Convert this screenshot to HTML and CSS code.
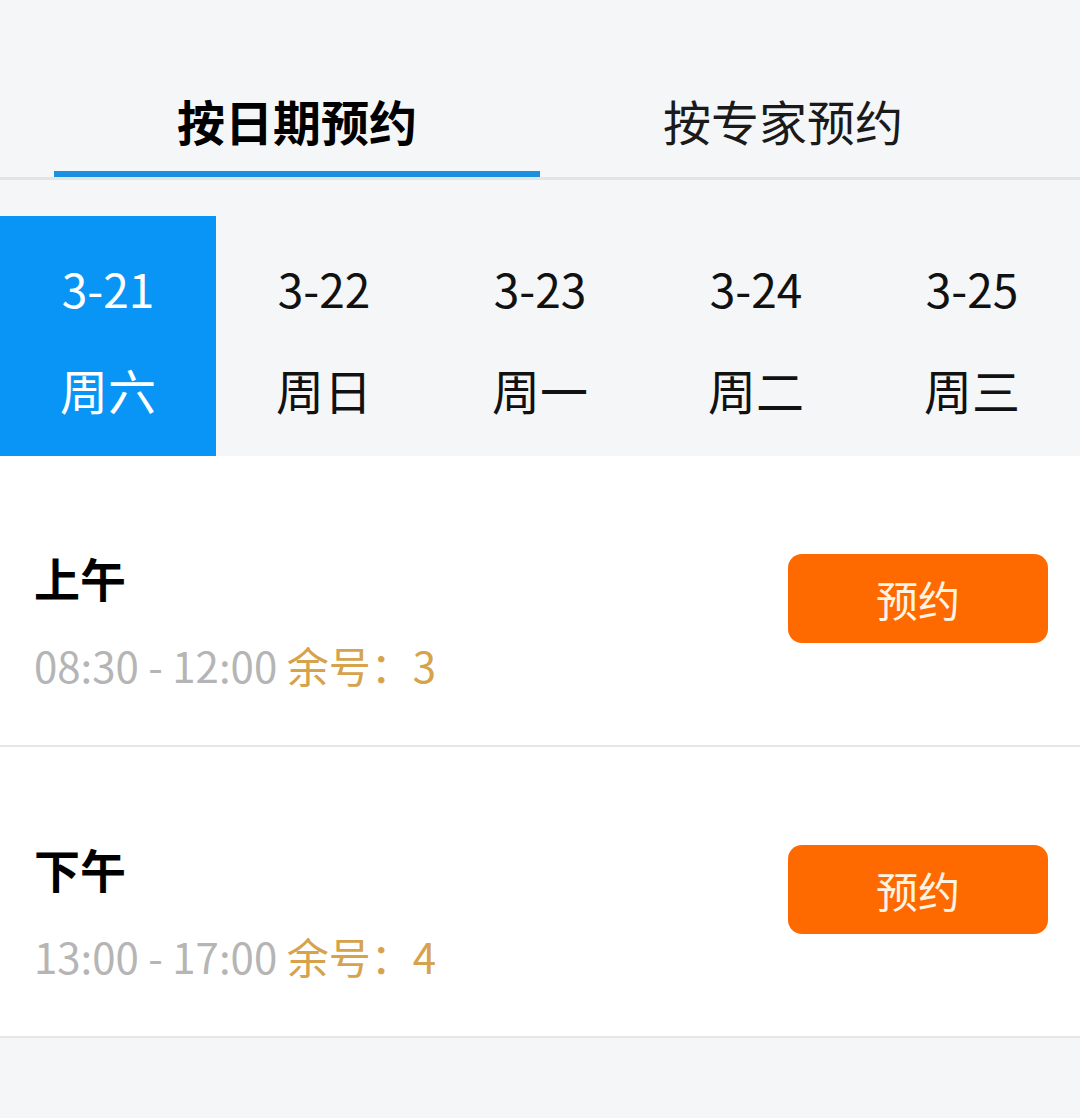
FILE: index.html
```html
<!DOCTYPE html>
<html lang="zh-CN">
<head>
    <meta charset="UTF-8">
    <meta name="viewport" content="width=device-width, initial-scale=1.0">
    <title>预约挂号</title>
    <link rel="stylesheet" href="styles.css">
</head>
<body>
    <div class="tabs">
        <div class="tab active">按日期预约</div>
        <div class="tab">按专家预约</div>
    </div>

    <div class="dates">
        <div class="date selected">
            <div class="day">3-21</div>
            <div class="week">周六</div>
        </div>
        <div class="date">
            <div class="day">3-22</div>
            <div class="week">周日</div>
        </div>
        <div class="date">
            <div class="day">3-23</div>
            <div class="week">周一</div>
        </div>
        <div class="date">
            <div class="day">3-24</div>
            <div class="week">周二</div>
        </div>
        <div class="date">
            <div class="day">3-25</div>
            <div class="week">周三</div>
        </div>
    </div>

    <div class="slots">
        <div class="slot">
            <div class="slot-info">
                <div class="slot-name">上午</div>
                <div class="slot-time">08:30 - 12:00 <span class="left">余号：3</span></div>
            </div>
            <button type="button" class="book">预约</button>
        </div>
        <div class="slot">
            <div class="slot-info">
                <div class="slot-name">下午</div>
                <div class="slot-time">13:00 - 17:00 <span class="left">余号：4</span></div>
            </div>
            <button type="button" class="book">预约</button>
        </div>
    </div>
</body>
</html>
```

FILE: styles.css
```css
body {
    margin: 0;
    background-color: #f5f6f8;
    font-family: "Noto Sans CJK SC", "Noto Sans", sans-serif;
    color: #111;
}
.tabs {
    display: flex;
    padding: 0 54px;
    border-bottom: 3px solid #e3e4e6;
}
.tab {
    flex: 1;
    height: 177px;
    box-sizing: border-box;
    padding-top: 85px;
    font-size: 48px;
    line-height: 70px;
    text-align: center;
    color: #1a1a1a;
}
.tab.active {
    font-weight: bold;
    color: #000;
    border-bottom: 6px solid #1b8fe0;
}
.dates {
    display: flex;
    margin-top: 36px;
    height: 240px;
}
.date {
    flex: 1;
    box-sizing: border-box;
    padding-top: 23px;
    text-align: center;
    color: #111;
}
.day {
    font-size: 46px;
    line-height: 98px;
}
.week {
    font-size: 48px;
    line-height: 104px;
}
.date.selected {
    background-color: #0895f5;
    color: #fff;
}
.slots {
    background-color: #fff;
}
.slot {
    display: flex;
    justify-content: space-between;
    align-items: flex-start;
    height: 289px;
    padding: 0 32px 0 34px;
    border-bottom: 2px solid #e6e6e6;
}
.slot-info {
    padding-top: 91px;
}
.slot-name {
    font-size: 46px;
    font-weight: bold;
    line-height: 60px;
    color: #000;
}
.slot-time {
    margin-top: 28px;
    font-size: 42px;
    line-height: 60px;
    color: #b5b5b5;
}
.left {
    color: #d6a24c;
}
.book {
    margin-top: 98px;
    width: 260px;
    height: 89px;
    border: none;
    border-radius: 14px;
    background-color: #ff6a00;
    color: #fff4e4;
    font-family: inherit;
    font-size: 42px;
    cursor: pointer;
}
```
